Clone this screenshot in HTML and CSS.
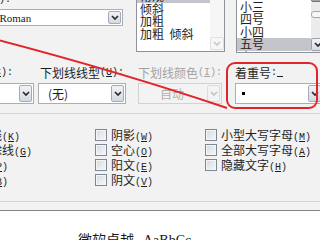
FILE: index.html
```html
<!DOCTYPE html>
<html>
<head>
<meta charset="utf-8">
<link rel="stylesheet" href="styles.css">
</head>
<body>
<div class="dlg">
  <div class="top">
    <div class="fontcol">
      <div class="lbl-r">西文字体<span class="ak">(<u>X</u>):</span></div>
      <div class="combo edit">
        <span class="val serif">Times New Roman</span>
        <span class="btn"><svg width="8" height="5" viewBox="0 0 8 5"><polyline points="1,1 4,4 7,1" /></svg></span>
      </div>
    </div>
    <div class="list stylelist">
      <div class="items">
        <div class="it sel">常规</div>
        <div class="it">倾斜</div>
        <div class="it">加粗</div>
        <div class="it">加粗&nbsp;&nbsp;倾斜</div>
      </div>
      <div class="sb pale">
        <span class="sbtn"></span>
        <span class="track"></span>
        <span class="sbtn down"><svg width="8" height="5" viewBox="0 0 8 5"><polyline points="1,1 4,4 7,1" /></svg></span>
      </div>
    </div>
    <div class="list sizelist">
      <div class="items">
        <div class="it">三号</div>
        <div class="it">小三</div>
        <div class="it">四号</div>
        <div class="it">小四</div>
        <div class="it sel">五号</div>
        <div class="it">小五</div>
      </div>
      <div class="sb">
        <span class="sbtn up"></span>
        <span class="track"><span class="thumb"></span></span>
        <span class="sbtn down"><svg width="8" height="5" viewBox="0 0 8 5"><polyline points="1,1 4,4 7,1" /></svg></span>
      </div>
    </div>
  </div>

  <div class="fields">
    <div class="field f1">
      <div class="lbl lbl-end">字体颜色<span class="ak">(<u>C</u>):</span></div>
      <div class="combo"><span class="val"></span><span class="btn"><svg width="8" height="5" viewBox="0 0 8 5"><polyline points="1,1 4,4 7,1" /></svg></span></div>
    </div>
    <div class="field f2">
      <div class="lbl">下划线线型<span class="ak">(<u>U</u>):</span></div>
      <div class="combo"><span class="val">(无)</span><span class="btn"><svg width="8" height="5" viewBox="0 0 8 5"><polyline points="1,1 4,4 7,1" /></svg></span></div>
    </div>
    <div class="field f3 disabled">
      <div class="lbl">下划线颜色<span class="ak">(<u>I</u>):</span></div>
      <div class="combo"><span class="val">自动</span><span class="btn"><svg width="8" height="5" viewBox="0 0 8 5"><polyline points="1,1 4,4 7,1" /></svg></span></div>
    </div>
    <div class="field f4">
      <div class="lbl">着重号<span class="ak">:<u>&nbsp;</u></span></div>
      <div class="combo"><span class="val"><span class="dot"></span></span><span class="btn"><svg width="8" height="5" viewBox="0 0 8 5"><polyline points="1,1 4,4 7,1" /></svg></span></div>
    </div>
  </div>

  <div class="sep"></div>

  <div class="checks">
    <div class="ccol c1">
      <div class="chk"><span class="box"></span><span>删除线<span class="ak">(<u>K</u>)</span></span></div>
      <div class="chk"><span class="box"></span><span>双删除线<span class="ak">(<u>G</u>)</span></span></div>
      <div class="chk"><span class="box"></span><span>上标<span class="ak">(<u>P</u>)</span></span></div>
      <div class="chk"><span class="box"></span><span>下标<span class="ak">(<u>B</u>)</span></span></div>
    </div>
    <div class="ccol c2">
      <div class="chk"><span class="box"></span><span>阴影<span class="ak">(<u>W</u>)</span></span></div>
      <div class="chk"><span class="box"></span><span>空心<span class="ak">(<u>O</u>)</span></span></div>
      <div class="chk"><span class="box"></span><span>阳文<span class="ak">(<u>E</u>)</span></span></div>
      <div class="chk"><span class="box"></span><span>阴文<span class="ak">(<u>V</u>)</span></span></div>
    </div>
    <div class="ccol c3">
      <div class="chk"><span class="box"></span><span>小型大写字母<span class="ak">(<u>M</u>)</span></span></div>
      <div class="chk"><span class="box"></span><span>全部大写字母<span class="ak">(<u>A</u>)</span></span></div>
      <div class="chk"><span class="box"></span><span>隐藏文字<span class="ak">(<u>H</u>)</span></span></div>
    </div>
  </div>

  <div class="sep2"></div>

  <div class="preview">
    <span class="pv-cn">微软卓越</span><span class="pv-en">AaBbCc</span>
  </div>

  <svg class="callout" width="320" height="240" viewBox="0 0 320 240">
    <rect x="227" y="63" width="90" height="45" rx="8" ry="8" />
    <path d="M-2,40 Q120,72 227,108" />
  </svg>
</div>
</body>
</html>
```

FILE: styles.css
```css
html, body {
  margin: 0;
  padding: 0;
  background: #f2f2f2;
  overflow: hidden;
}

.dlg {
  position: relative;
  width: 320px;
  height: 240px;
  overflow: hidden;
  font-family: "Noto Sans CJK SC", "Noto Sans", sans-serif;
  font-size: 12px;
  color: #1e1e1e;
  background: #f2f2f2;
}

.ak {
  font-family: "Liberation Mono", "DejaVu Sans Mono", monospace;
  font-size: 10px;
}

u {
  text-decoration: underline;
  text-underline-offset: 1px;
}

/* ---------- top row ---------- */
.top {
  display: flex;
  align-items: flex-start;
  margin-top: -15px;
  height: 68px;
}

.fontcol {
  display: flex;
  flex-direction: column;
  margin-left: -64px;
  width: 187px;
  flex: none;
}

.lbl-r {
  display: flex;
  justify-content: flex-end;
  white-space: nowrap;
  width: 75px;
  height: 14px;
  line-height: 14px;
  margin-top: 8px;
}

.combo {
  display: flex;
  align-items: stretch;
  box-sizing: border-box;
  border: 1px solid #abadb3;
  background: #fff;
  height: 21px;
}

.combo .val {
  flex: 1;
  display: flex;
  align-items: center;
  white-space: nowrap;
  overflow: hidden;
}

.combo .btn {
  flex: none;
  width: 13px;
  margin: 1px;
  box-sizing: border-box;
  border: 1px solid #a3abb9;
  border-radius: 2px;
  background: linear-gradient(#f1f3f7, #d3d8e2);
  display: flex;
  align-items: center;
  justify-content: center;
}

svg polyline {
  fill: none;
  stroke: #2a2a2a;
  stroke-width: 1.7;
}

.combo.edit {
  margin-top: 2px;
  margin-left: 12px;
  height: 17px;
}

.combo.edit .val {
  padding-left: 0;
  margin-left: -3px;
}

.serif {
  font-family: "Liberation Serif", serif;
  font-size: 11px;
  color: #222;
}

.list {
  flex: none;
  display: flex;
  box-sizing: border-box;
  border: 1px solid #8e939b;
  background: #fff;
  overflow: hidden;
}

.list .items {
  flex: 1;
  display: flex;
  flex-direction: column;
  overflow: hidden;
}

.list .it {
  height: 12.5px;
  line-height: 12.5px;
  padding-left: 3px;
  white-space: nowrap;
  flex: none;
}

.list .it.sel {
  background: #c4c4cc;
}

.stylelist {
  margin-left: 13px;
  width: 89px;
  height: 67px;
}

.stylelist .items {
  padding-top: 4px;
}

.sizelist {
  margin-left: 11px;
  width: 90px;
  height: 68px;
}

.sizelist .items {
  padding-top: 2px;
}

.sb {
  flex: none;
  width: 14px;
  display: flex;
  flex-direction: column;
  background: #ebebeb;
}

.sb .sbtn {
  flex: none;
  height: 13px;
  box-sizing: border-box;
  border: 1px solid #9ca3ad;
  border-radius: 2px;
  background: linear-gradient(#f3f4f6, #d8dbe0);
  display: flex;
  align-items: center;
  justify-content: center;
}

.sb .sbtn.up {
  height: 16px;
  border-color: #6f747a;
  background: linear-gradient(#e4e6ea, #9ea3aa);
}

.sb .sbtn.down {
  margin-bottom: 1px;
}

.sb .track {
  flex: 1;
  display: flex;
  flex-direction: column;
}

.sb .thumb {
  margin-top: 9px;
  height: 7px;
  box-sizing: border-box;
  border: 1px solid #a4a8ae;
  border-radius: 3px;
  background: #f7f7f7;
}

.sb.pale {
  background: #f6f6f6;
}

.sb.pale .sbtn {
  border-color: #e0e0e0;
  background: #f7f7f7;
}

.sb.pale polyline {
  stroke: #c8c8c8;
}

/* ---------- fields row ---------- */
.fields {
  display: flex;
  margin-top: 13px;
  margin-left: -50px;
}

.field {
  flex: none;
  display: flex;
  flex-direction: column;
}

.lbl {
  height: 14px;
  line-height: 14px;
  white-space: nowrap;
  display: flex;
  margin-bottom: 3px;
}

.f1 {
  width: 84px;
}

.lbl-end {
  justify-content: flex-end;
  width: 63px;
}

.f2 {
  width: 88px;
  margin-left: 4px;
}

.f2 .lbl {
  padding-left: 2px;
}

.f2 .val {
  padding-left: 9px;
}

.f3 {
  width: 84px;
  margin-left: 12px;
}

.f3 .lbl {
  color: #a3a3a3;
}

.f3 .combo {
  border-color: #d2d2d2;
  background: #f3f3f3;
}

.f3 .val {
  padding-left: 21px;
  color: #b0b0b0;
}

.f3 .btn {
  border-color: #dcdcdc;
  background: #f3f3f3;
}

.f3 polyline {
  stroke: #c4c4c4;
}

.f4 {
  width: 88px;
  margin-left: 13px;
}

.f4 .val {
  padding-left: 6px;
}

.dot {
  display: block;
  width: 3px;
  height: 3px;
  background: #000;
}

/* ---------- separators ---------- */
.sep {
  margin-top: 9px;
  height: 0;
  border-top: 1px solid #d6d6d6;
}

.sep2 {
  margin-top: 14px;
  height: 0;
  border-top: 1px solid #d3d3d3;
}

/* ---------- checkboxes ---------- */
.checks {
  display: flex;
  margin-top: 13px;
  margin-left: -50px;
  height: 60px;
}

.ccol {
  flex: none;
  display: flex;
  flex-direction: column;
}

.c1 {
  width: 145px;
}

.c2 {
  width: 110px;
}

.chk {
  display: flex;
  align-items: center;
  height: 15px;
  white-space: nowrap;
}

.box {
  flex: none;
  width: 12px;
  height: 12px;
  box-sizing: border-box;
  border: 1px solid #7d8896;
  background: linear-gradient(135deg, #d6d9de, #f7f8f9);
  margin-right: 4px;
  box-shadow: inset 0 0 0 1px #f4f5f7;
}

/* ---------- preview ---------- */
.preview {
  margin-top: 8px;
  border-top: 1px solid #858585;
  background: #fff;
  height: 40px;
  padding-top: 20px;
  padding-left: 78px;
  line-height: 16px;
  white-space: nowrap;
}

.pv-cn {
  font-size: 14px;
  color: #1a1a1a;
}

.pv-en {
  font-family: "Liberation Serif", serif;
  font-size: 14px;
  margin-left: 9px;
  color: #1a1a1a;
}

/* ---------- red callout ---------- */
.callout {
  position: absolute;
  left: 0;
  top: 0;
  pointer-events: none;
}

.callout rect,
.callout path {
  fill: none;
  stroke: #e2252b;
  stroke-width: 2;
}
```
